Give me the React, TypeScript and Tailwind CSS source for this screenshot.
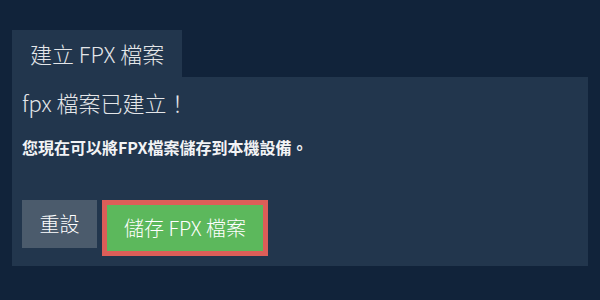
export default function App() {
  return (
    <div
      className="min-h-[300px] bg-[#11233a] px-3 pt-[30px]"
      style={{ fontFamily: '"Noto Sans CJK TC", "Noto Sans", sans-serif' }}
    >
      <div className="inline-block h-[47px] w-[170px] bg-[#22364d] pl-[18px] text-[22px] font-light leading-[47px] text-[#e4e6e9]">
        建立 FPX 檔案
      </div>
      <div className="h-[189px] bg-[#22364d] px-[10px] pt-[10px]">
        <h2 className="text-[22px] font-light leading-[30px] text-[#e4e6e9]">fpx 檔案已建立！</h2>
        <p className="mt-[18px] text-base font-bold leading-6 text-[#f2f3f5]">
          您現在可以將FPX檔案儲存到本機設備。
        </p>
        <div className="mt-[41px] flex items-start gap-[5px]">
          <button className="h-12 w-[75px] bg-[#4b5b6c] text-[20px] font-light text-white">重設</button>
          <button className="h-14 w-[166px] border-[5px] border-[#dc5e58] bg-[#5cb85c] text-[20px] font-light text-white">
            儲存 FPX 檔案
          </button>
        </div>
      </div>
    </div>
  );
}
